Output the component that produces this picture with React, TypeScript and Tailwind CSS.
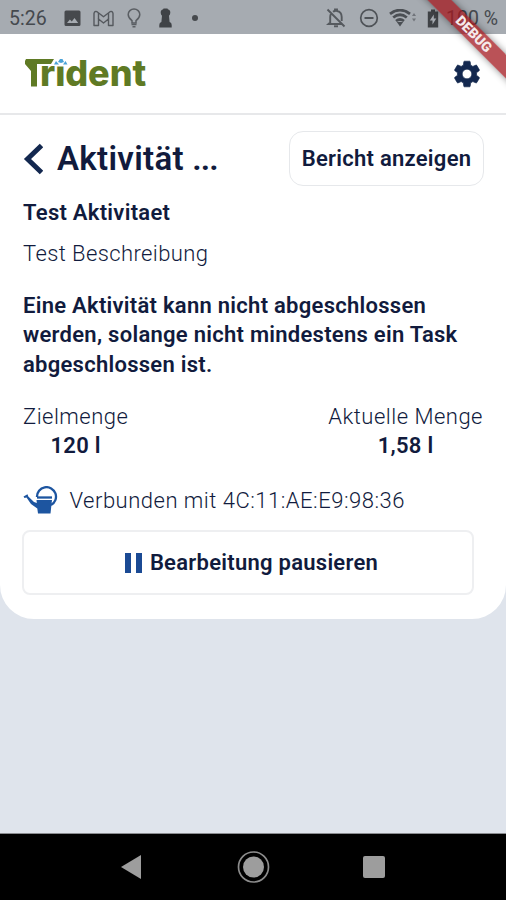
import React from "react";

function StatusBar() {
  return (
    <div className="flex h-[34px] items-center bg-[#a6abb1] pt-[2px] text-[19.5px] leading-[34px] text-[#45494e]">
      <span className="w-[55px] pl-[9px] pt-[1px]">5:26</span>
      <svg className="ml-[8.5px]" width="17" height="17" viewBox="0 0 17 17" fill="#46494d">
        <path fillRule="evenodd" d="M2 .5h13Q16.5.5 16.5 2v12.500q0 1.500-1.500 1.500H2q-1.500 0-1.500-1.500V2Q.5.5 2 .5zM3 13h11.200l-3.700-5-2.700 3.500-1.900-2z" />
      </svg>
      <svg className="ml-[12px]" width="21" height="17" viewBox="0 0 21 17" fill="none" stroke="#55595e" strokeWidth="1.400" strokeLinejoin="round">
        <path d="M1 15.500V3.500Q1.500.8 4 1.700l6.500 5 6.500-5Q19.500.8 20 3.500v12h-4.500V9l-5 4-5-4v6.500z" />
        <path d="M5.500 9V3M15.500 9V3" />
      </svg>
      <svg className="ml-[13.500px]" width="14" height="20" viewBox="0 0 14 20" fill="none" stroke="#5a5e63" strokeWidth="1.500">
        <path d="M5 15v-2.300Q1.200 9.800 1.200 6.500a5.800 5.500 0 0 1 11.600 0Q12.800 9.800 9 12.700V15z" />
        <path d="M4.500 16.500h5M5.500 18.800h3" />
      </svg>
      <svg className="ml-[18px]" width="13" height="20" viewBox="0 0 13 20" fill="#3f4246">
        <path d="M4.500.5h4l.3.800q2.700.7 2.500 3.500-.1 2-1.300 3l.6 6.200q2.100.5 2.100 3V19.500H.3V17q0-2.500 2.100-3L3 7.800q-1.200-1-1.300-3-.2-2.800 2.500-3.500z" />
      </svg>
      <span className="ml-[20px] h-[6px] w-[6px] rounded-full bg-[#46494d]" />
      <div className="ml-auto flex items-center">
        <svg width="20" height="20" viewBox="0 0 20 20" fill="none" stroke="#55595e" strokeWidth="1.900">
          <path d="M1.500 1.500l17 17M5 5.800Q4.200 7 4.200 9v5.500L2.500 16h13.300M7 3.700q.9-.6 2-.7V1.500h2V3q4.600.8 4.700 6v4" />
          <path d="M8 18.300h4" />
        </svg>
        <svg className="ml-[13px]" width="20" height="20" viewBox="0 0 20 20" fill="none" stroke="#4f5358" strokeWidth="1.700">
          <circle cx="10" cy="10" r="8.300" />
          <path d="M5.500 10h9" strokeWidth="2" />
        </svg>
        <svg className="ml-[10px]" width="28" height="18" viewBox="0 0 28 18" fill="none" stroke="#4b4f54" strokeWidth="2.800">
          <path d="M1 4.800Q11-2.500 21 4.800M4.200 8.500Q11 3 17.800 8.500M7 12Q11 9 15 12" />
          <path d="M7.800 13h6.400L11 17.500z" fill="#4b4f54" stroke="none" />
          <path d="M23 7l2-3 2 3zM23 9.500h4l-2 3z" fill="#70747a" stroke="none" />
        </svg>
        <svg className="ml-[10px]" width="12" height="19" viewBox="0 0 12 19" fill="#3f4246">
          <path fillRule="evenodd" d="M4 .5h4v2h3.200v16H.8v-16H4zM6.800 5.500l-4 6h2.700v4l3.800-6H6.800z" />
        </svg>
        <span className="ml-[7px] w-[60px] whitespace-nowrap pt-[1px]">100 %</span>
      </div>
    </div>
  );
}

function DebugRibbon() {
  return (
    <div className="pointer-events-none absolute right-0 top-0 h-[110px] w-[110px] overflow-hidden">
      <div className="absolute left-[-13px] top-[25px] h-[17px] w-[180px] rotate-45 bg-[#a3181f]/75 text-center font-[Roboto] text-[14px] font-black leading-[17px] text-[#f5e9ea] shadow-[0_0_7px_rgba(0,0,0,0.45)]">
        <span className="relative left-[1px]">DEBUG</span>
      </div>
    </div>
  );
}

function Logo() {
  return (
    <div className="relative mt-[-1px] h-[40px] w-[130px] whitespace-nowrap font-[Inter] text-[36px] font-extrabold leading-[40px] tracking-[-0.100px] text-[#5f7a24]">
      <span className="inline-block w-[16px] text-[20px] text-transparent">T</span>
      <span>rident</span>
      <svg className="absolute left-0 top-0" width="60" height="40" viewBox="0 0 60 40">
        <path d="M32 0h11v13.500h-11z" fill="#fff" />
        <path d="M2 6h28l-3 5H13V33.500H7V18L1 11V8z" fill="#5f7a24" />
        <path d="M30 11.500l2-3.500 3 3.500zM34 9l2-3h2.500l1.500 3-3 1zM39 11.500l2.500-3.500 2 3.500z" fill="#4aa3d8" />
      </svg>
    </div>
  );
}

function WateringCan() {
  return (
    <svg width="36" height="29" viewBox="0 0 36 29" fill="none">
      <path d="M14 11A9.500 9.500 0 1 1 28 19" stroke="#1d55a0" strokeWidth="2.300" />
      <path d="M14 11.500h15" stroke="#1d55a0" strokeWidth="2.300" />
      <path d="M13.500 14h15.500l-1.500 13.500H15l-.7-5L8 18 3.500 11.500l-2 .5L.5 10.500l4-2.300.8 2.300 5.700 5.500 2.800 1z" fill="#1d55a0" />
    </svg>
  );
}

export default function App() {
  return (
    <div className="relative flex h-[900px] w-[506px] flex-col overflow-hidden bg-[#dfe4ec] font-[Roboto,sans-serif] text-[#111b3d]">
      <div className="flex h-[619px] flex-col overflow-hidden rounded-b-[34px] bg-white">
        <StatusBar />
        <header className="flex h-[81px] items-center justify-between border-b-2 border-[#e7e8ea] pl-[24px] pr-[23px]">
          <Logo />
          <svg width="32" height="32" viewBox="0 0 24 24" fill="#13284f" stroke="#13284f" strokeWidth="0.500">
            <path d="M19.140 12.940c.040-.3.060-.61.060-.94 0-.32-.020-.64-.070-.94l2.030-1.580c.18-.14.230-.41.120-.61l-1.920-3.320c-.12-.22-.37-.29-.59-.22l-2.390.96c-.5-.38-1.030-.7-1.620-.94l-.36-2.540c-.04-.24-.24-.41-.48-.41h-3.840c-.24 0-.43.17-.47.41l-.36 2.540c-.59.24-1.130.57-1.620.94l-2.390-.96c-.22-.08-.47 0-.59.22L2.740 8.870c-.12.21-.08.47.12.61l2.030 1.580c-.05.3-.09.63-.09.94s.02.64.07.94l-2.030 1.580c-.18.14-.23.41-.12.61l1.920 3.320c.12.22.37.29.59.22l2.390-.96c.5.38 1.030.7 1.620.94l.36 2.540c.05.24.24.41.48.41h3.840c.24 0 .44-.17.47-.41l.36-2.540c.59-.24 1.130-.56 1.620-.94l2.390.96c.22.08.47 0 .59-.22l1.920-3.320c.12-.22.07-.47-.12-.61l-2.010-1.580zM12 15.600c-1.980 0-3.600-1.620-3.600-3.600s1.620-3.600 3.600-3.600 3.600 1.620 3.600 3.600-1.620 3.600-3.600 3.600z" />
          </svg>
        </header>
        <main className="flex flex-col pl-[23px] pr-[22px] pt-[16px] text-[22px] leading-[29.500px] tracking-[0.270px]">
          <div className="flex h-[55px] items-center">
            <svg width="20" height="32" viewBox="0 0 20 32" fill="none" stroke="#13284f" strokeWidth="5">
              <path d="M18.500 2.500L4.500 16 18.500 29.500" />
            </svg>
            <h1 className="ml-[14px] whitespace-nowrap text-[33px] font-semibold leading-[40px] tracking-[0.300px]">
              Aktivität <span className="tracking-[-0.900px]">...</span>
            </h1>
            <button className="ml-auto h-[55px] w-[195px] whitespace-nowrap rounded-[14px] border-[1.500px] border-[#e6e8eb] text-[22px] font-semibold tracking-[0.270px]">Bericht anzeigen</button>
          </div>
          <p className="mt-[12px] font-semibold">Test Aktivitaet</p>
          <p className="mt-[11px] font-light tracking-[0.400px]">Test Beschreibung</p>
          <p className="mt-[22.500px] whitespace-nowrap font-semibold">
            Eine Aktivität kann nicht abgeschlossen<br />
            werden, solange nicht mindestens ein Task<br />
            abgeschlossen ist.
          </p>
          <div className="mt-[22.500px] flex justify-between pr-[1px] text-center">
            <div>
              <p className="font-light tracking-[0.480px]">Zielmenge</p>
              <p className="font-semibold">120 l</p>
            </div>
            <div>
              <p className="font-light tracking-[0.500px]">Aktuelle Menge</p>
              <p className="font-semibold">1,58 l</p>
            </div>
          </div>
          <div className="mt-[25px] flex items-center">
            <WateringCan />
            <p className="ml-[10.500px] font-light tracking-[0.500px]">Verbunden mit 4C:11:AE:E9:98:36</p>
          </div>
          <button className="ml-[-1px] mt-[15px] flex h-[65px] w-[452px] items-center justify-center rounded-[8px] border-2 border-[#eeeff1] pl-[7px] font-semibold tracking-[0.270px]">
            <span className="mr-[8px] flex gap-[5px]">
              <span className="h-[20px] w-[6px] bg-[#1b4a94]" />
              <span className="h-[20px] w-[6px] bg-[#1b4a94]" />
            </span>
            Bearbeitung pausieren
          </button>
        </main>
      </div>
      <nav className="mt-auto flex h-[67px] items-center border-t border-[#8a8c90] bg-black pl-[120px]">
        <svg width="22" height="26" viewBox="0 0 22 26" fill="#9d9d9d"><path d="M1 13L21 1v24z" /></svg>
        <svg className="ml-[95px]" width="34" height="34" viewBox="0 0 34 34">
          <circle cx="16.500" cy="17" r="15" fill="none" stroke="#8c8c8c" strokeWidth="1.700" />
          <circle cx="16.500" cy="17" r="10.500" fill="#9d9d9d" />
        </svg>
        <span className="ml-[92px] h-[22px] w-[22px] rounded-[2px] bg-[#9d9d9d]" />
      </nav>
      <DebugRibbon />
    </div>
  );
}
